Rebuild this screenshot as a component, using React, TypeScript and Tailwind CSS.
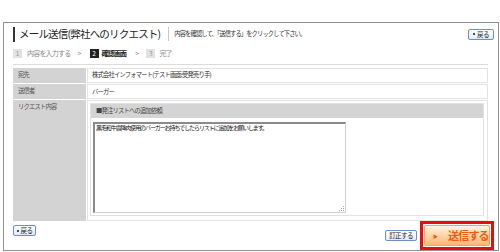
import React from "react";

const jp = { fontFamily: '"Noto Sans CJK JP", "Noto Sans", sans-serif' };

function SmallBtn({ children, className = "" }: { children: React.ReactNode; className?: string }) {
  return (
    <div
      className={`flex items-center gap-[2px] h-[11px] px-[2px] rounded-[2px] border border-[#6d8fc9] bg-gradient-to-b from-white to-[#e3ebf7] text-[6.5px] leading-none text-[#222] whitespace-nowrap tracking-[-0.6px] ${className}`}
    >
      {children}
    </div>
  );
}

export default function App() {
  return (
    <div className="w-[500px] h-[252px] bg-white pt-[22px] pl-[3px] pr-[1px] overflow-hidden whitespace-nowrap" style={jp}>
      <div className="h-[229px] border border-[#909090] pl-[9px] pr-[10px] pt-[3px] flex flex-col">
        {/* title row */}
        <div className="flex items-center h-[16px]">
          <div className="w-[2px] h-[15px] bg-[#333]" />
          <div className="ml-[4px] text-[10.5px] leading-none text-[#222] tracking-[-0.8px]">メール送信(弊社へのリクエスト)</div>
          <div className="ml-[8px] w-px h-[14px] bg-[#c8c8c8]" />
          <div className="ml-[5px] text-[6.3px] leading-none text-[#333] tracking-[-0.9px]">内容を確認して、「送信する」をクリックして下さい。</div>
          <div className="flex-1" />
          <SmallBtn className="mr-[-6px] w-[26px] justify-center">
            <span className="w-[2px] h-[2px] bg-[#2050b0]" />
            <span>戻る</span>
          </SmallBtn>
        </div>
        {/* steps */}
        <div className="flex items-center mt-[6px] h-[10px] text-[7px] leading-none text-[#888] tracking-[-0.8px]">
          <div className="w-[9px] h-[9px] bg-[#e2e2e2] text-[#999] flex items-center justify-center text-[6.5px] tracking-normal">1</div>
          <span className="ml-[5px]">内容を入力する</span>
          <span className="ml-[7px]">&gt;</span>
          <div className="ml-[9px] w-[9px] h-[9px] bg-[#222] text-white flex items-center justify-center text-[6.5px] tracking-normal">2</div>
          <span className="ml-[3px] text-[#222] font-bold">確認画面</span>
          <span className="ml-[9px]">&gt;</span>
          <div className="ml-[8px] w-[9px] h-[9px] bg-[#e2e2e2] text-[#999] flex items-center justify-center text-[6.5px] tracking-normal">3</div>
          <span className="ml-[4px]">完了</span>
        </div>
        <div className="mt-[6px] h-px bg-[#dcdcdc]" />
        {/* table */}
        <div className="mt-[3px] flex flex-col gap-[1px] text-[6.3px] leading-none text-[#333] tracking-[-0.8px]">
          <div className="flex h-[15px] gap-[1px]">
            <div className="w-[73px] bg-[#d3d3d3] pl-[5px] pt-[4px] text-[#555]">宛先</div>
            <div className="flex-1 border border-[#e2e2e2] pl-[4px] pt-[3px]">株式会社インフォマート(テスト画面:受発売り手)</div>
          </div>
          <div className="flex h-[15px] gap-[1px]">
            <div className="w-[73px] bg-[#d3d3d3] pl-[5px] pt-[4px] text-[#555]">送信者</div>
            <div className="flex-1 border border-[#e2e2e2] pl-[4px] pt-[4px]">バーガー</div>
          </div>
          <div className="flex h-[121px] gap-[1px]">
            <div className="w-[73px] bg-[#d3d3d3] pl-[5px] pt-[4px] text-[#555]">リクエスト内容</div>
            <div className="flex-1 border border-[#e2e2e2] p-[2px] pr-[3px] pb-[4px] flex flex-col">
              <div className="flex-1 border border-[#e2e2e2] flex flex-col">
                <div className="h-[14px] bg-[#d4d4d4] pl-[5px] flex items-center text-[#444]">■発注リストへの追加依頼</div>
                <div className="pl-[2px] pt-[4px]">
                  <div className="relative w-[253px] h-[91px] border-t-2 border-l-2 border-[#8a8a8a] border-r border-b border-r-[#d0d0d0] border-b-[#d0d0d0] bg-white pl-[1px] pt-[1px] text-[6px] text-[#111] tracking-[-1.1px]">
                    黒毛和牛霜降肉使用のバーガーお持ちでしたらリストに追加をお願いします。
                    <div className="absolute right-[1px] bottom-[1px] w-[5px] h-[5px]">
                      <svg width="5" height="5" viewBox="0 0 5 5">
                        <rect x="4" y="0" width="1" height="1" fill="#aaa" />
                        <rect x="2" y="2" width="1" height="1" fill="#aaa" />
                        <rect x="4" y="2" width="1" height="1" fill="#aaa" />
                        <rect x="0" y="4" width="1" height="1" fill="#aaa" />
                        <rect x="2" y="4" width="1" height="1" fill="#aaa" />
                        <rect x="4" y="4" width="1" height="1" fill="#aaa" />
                      </svg>
                    </div>
                  </div>
                </div>
              </div>
            </div>
          </div>
        </div>
        {/* bottom buttons */}
        <div className="flex-1 flex items-start">
          <SmallBtn className="mt-[4px] w-[23px] justify-center">
            <span className="w-[2px] h-[2px] bg-[#2050b0]" />
            <span>戻る</span>
          </SmallBtn>
          <div className="flex-1" />
          <SmallBtn className="mt-[9px] w-[32px] justify-center">
            <span>訂正する</span>
          </SmallBtn>
          <div className="ml-[3px] mr-[-6px] w-[74px] h-[29px] border-[3px] border-[#e01010] p-[1px] bg-white">
            <div className="w-full h-full rounded-[2px] border border-[#f2a25e] bg-gradient-to-b from-[#fff3e6] via-[#ffd5a8] to-[#ffb874] flex items-center pl-[8px] text-[#f05a0a]">
              <span className="text-[5px] leading-none">▶</span>
              <span className="ml-[10px] text-[11px] leading-none font-bold tracking-[-0.8px]">送信する</span>
            </div>
          </div>
        </div>
      </div>
    </div>
  );
}
